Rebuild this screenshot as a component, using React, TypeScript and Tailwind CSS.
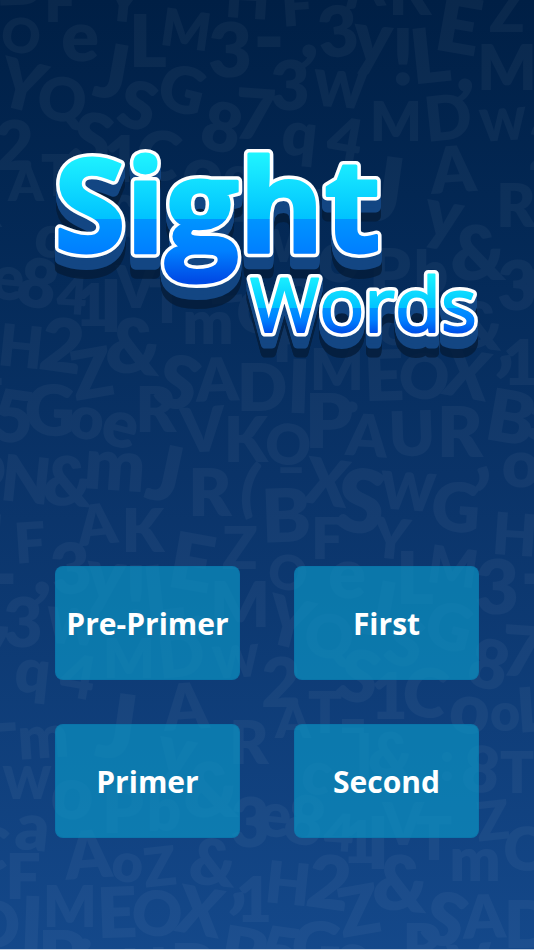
import { useId } from "react"

type Glyph = [char: string, x: number, y: number, size: number, rotate: number]

const TILE_W = 534
const TILE_H = 1074

// centre x, centre y, font size, rotation
const glyphs: Glyph[] = [
  ["F", 60, 2, 56, 0], ["Y", 124, 2, 56, 6], ["H", 248, -2, 58, 4], ["F", 297, 6, 56, -4],
  ["A", 364, -12, 56, -6], ["K", 410, -6, 60, 0], ["E", 459, 26, 78, 10], ["Z", 507, 12, 58, 0],
  ["O", 21, 36, 48, 10], ["e", 80, 36, 70, 0], ["J", 112, 72, 76, 10], ["L", 148, 42, 72, 0],
  ["M", 186, 30, 52, 8], ["3", 230, 50, 76, 0], ["-", 269, 38, 84, 0], [",", 313, 30, 80, 10],
  ["3", 338, 32, 70, -6], ["y", 373, 38, 72, 6], ["!", 403, 58, 78, 0], ["L", 430, 56, 76, -6],
  [",", 469, 64, 80, 10], ["M", 507, 68, 62, 0],
  ["Y", 22, 86, 68, 14], ["Q", 62, 100, 60, 4], ["S", 138, 106, 66, 16], ["G", 182, 90, 64, 14],
  ["8", 222, 128, 68, 14], ["7", 255, 115, 70, 4], ["3", 290, 86, 68, 0], ["W", 340, 90, 50, 4],
  ["2", 14, 146, 68, 0], ["S", 92, 140, 72, 14], ["1", 122, 160, 64, 0], ["C", 158, 156, 68, 10],
  ["q", 300, 134, 62, 6], ["4", 345, 140, 60, 10], ["M", 396, 122, 54, 0], ["D", 448, 118, 62, -6],
  ["W", 503, 125, 44, -4],
  ["A", 26, 183, 50, 0], ["T", 58, 176, 56, 0], ["=", 86, 188, 48, 0], ["o", 203, 172, 70, 6],
  ["o", 238, 176, 52, 0], ["L", 266, 173, 62, -4], ["m", 310, 200, 60, -4],
  ["J", 384, 190, 90, 8], ["A", 453, 170, 64, -4], ["y", 444, 214, 70, 10], ["R", 516, 206, 60, 0],
  ["l", 97, 220, 60, 0], ["&", 124, 218, 60, 8], ["c", 50, 236, 60, 10], [":", 180, 224, 56, 0],
  ["8", 214, 233, 64, 8], ["T", 250, 236, 56, 0], ["W", 294, 246, 46, 0], ["o", 340, 256, 74, 8],
  ["&", 478, 253, 76, 0], ["P", 390, 273, 66, 0], ["b", 431, 273, 60, 0], ["3", 517, 286, 68, 0],
  ["e", 8, 278, 62, 6], ["8", 38, 284, 68, 14], ["4", 72, 296, 52, 4], ["1", 92, 306, 58, 0],
  ["I", 111, 307, 72, 0], ["V", 136, 288, 58, 0], ["T", 167, 302, 60, 0], ["Z", 226, 284, 54, -6],
  ["a", 300, 290, 66, 6], ["A", 355, 318, 66, -4], ["o", 395, 326, 54, 8], ["Z", 427, 330, 54, -6],
  ["&", 480, 326, 64, 6], ["m", 208, 323, 60, 0], ["C", 256, 312, 60, 6], ["F", 290, 340, 62, 0],
  ["H", 21, 347, 58, 6], ["2", 62, 346, 74, 8], ["&", 134, 347, 76, 6], ["Z", 92, 374, 68, -10],
  ["S", 178, 383, 74, 18], ["A", 217, 380, 60, -2], ["D", 262, 388, 66, 0], ["I", 299, 387, 74, 2],
  ["M", 337, 370, 56, 0], ["E", 384, 376, 70, -2], ["O", 424, 377, 62, 12], ["X", 467, 375, 66, 10],
  ["’", 501, 386, 76, 10], ["1", 521, 363, 62, 0],
  ["5", 13, 417, 72, 8], ["G", 50, 411, 70, 2], ["o", 87, 418, 60, 8], ["e", 121, 424, 66, 14],
  ["R", 156, 410, 62, 0], ["V", 203, 430, 62, -4], ["K", 246, 440, 62, 0], ["P", 329, 421, 76, 0],
  [".", 352, 390, 64, 0], ["A", 367, 436, 58, 4], ["U", 412, 434, 62, -2], ["R", 460, 432, 70, 0],
  ["B", 511, 418, 72, 10], ["O", 288, 445, 56, 4],
  ["N", 26, 480, 64, 6], ["&", 68, 482, 68, 4], ["m", 115, 465, 72, 4], ["J", 165, 474, 78, 12],
  ["R", 210, 493, 66, 0], ["(", 250, 488, 62, 10], ["–", 291, 468, 52, 0], ["X", 327, 483, 64, 8],
  ["S", 361, 502, 88, 8], ["W", 408, 492, 52, 4], ["G", 456, 508, 68, 4], ["’", 481, 498, 76, 4],
  ["o", 521, 464, 66, 0], ["B", 286, 516, 74, -2],
]

// the second band of letters is the first one moved by half a tile
const copies = [
  [0, 0],
  [-267, 537],
  [267, 537],
  [-534, 0],
  [534, 0],
  [0, 1074],
  [-267, -537],
  [267, -537],
]

const levels = ["Pre-Primer", "First", "Primer", "Second"]

function LetterBackdrop() {
  const id = useId()
  return (
    <svg className="absolute inset-0 h-full w-full" aria-hidden="true">
      <defs>
        <g
          id={`${id}-set`}
          fill="#ffffff"
          textAnchor="middle"
          className="font-['Lato','Open_Sans',sans-serif] font-extrabold"
        >
          {glyphs.map(([char, x, y, size, rotate], i) => (
            <text key={i} x={x} y={y} dy="0.35em" fontSize={size} transform={`rotate(${rotate} ${x} ${y})`}>
              {char}
            </text>
          ))}
        </g>
        <pattern id={`${id}-tile`} width={TILE_W} height={TILE_H} patternUnits="userSpaceOnUse">
          {copies.map(([x, y]) => (
            <use key={`${x},${y}`} href={`#${id}-set`} x={x} y={y} />
          ))}
        </pattern>
      </defs>
      <rect width="100%" height="100%" fill={`url(#${id}-tile)`} opacity="0.04" />
    </svg>
  )
}

interface LogoWordProps {
  text: string
  x: number
  y: number
  size: number
  weight: number
  fill: string
  inner: number
  outline: number
}

// White outline with the gradient face on top
function LogoWord({ text, x, y, size, weight, fill, inner, outline }: LogoWordProps) {
  const word = { x, y, fontSize: size, fontWeight: weight, strokeLinejoin: "round" as const }
  return (
    <g>
      <text {...word} fill="#ffffff" stroke="#ffffff" strokeWidth={outline} aria-hidden="true">
        {text}
      </text>
      <text {...word} fill={fill} stroke={fill} strokeWidth={inner}>
        {text}
      </text>
    </g>
  )
}

function Logo() {
  return (
    // stacked shadows give the letters their solid side
    <h1 className="[filter:drop-shadow(0_1px_0_#134683)_drop-shadow(0_2px_0_#134683)_drop-shadow(0_4px_0_#134683)_drop-shadow(0_5px_0_#134683)_drop-shadow(0_9px_0_#041b38cc)]">
      <svg
        viewBox="40 130 454 240"
        className="block w-full font-['Open_Sans','Noto_Sans',sans-serif]"
        role="img"
        aria-label="Sight Words"
      >
        <defs>
          <linearGradient id="sight" gradientUnits="userSpaceOnUse" x1="0" y1="148" x2="0" y2="280">
            <stop offset="0" stopColor="#22f8ff" />
            <stop offset="0.54" stopColor="#00c2ff" />
            <stop offset="0.54" stopColor="#0094ff" />
            <stop offset="0.78" stopColor="#0080ff" />
            <stop offset="1" stopColor="#004ce6" />
          </linearGradient>
          <linearGradient id="words" gradientUnits="userSpaceOnUse" x1="0" y1="274" x2="0" y2="335">
            <stop offset="0" stopColor="#1cf4ff" />
            <stop offset="0.55" stopColor="#00c4ff" />
            <stop offset="0.55" stopColor="#0094ff" />
            <stop offset="0.75" stopColor="#0080ff" />
            <stop offset="1" stopColor="#0048e4" />
          </linearGradient>
        </defs>
        <LogoWord text="Sight" x={54} y={252} size={130} weight={700} fill="url(#sight)" inner={3} outline={10} />
        <LogoWord text="Words" x={250} y={332} size={75} weight={400} fill="url(#words)" inner={2} outline={9} />
      </svg>
    </h1>
  )
}

export default function App() {
  return (
    <main className="relative min-h-screen overflow-hidden border-b border-[#c3cfe0] bg-linear-to-b from-[#001f45] via-[#0a3368] to-[#14488a] font-['Open_Sans','Noto_Sans',sans-serif]">
      <LetterBackdrop />
      <div className="relative px-10 pt-[130px] pb-24">
        <Logo />
        <nav className="mt-[196px] grid grid-cols-2 gap-x-[54px] gap-y-11 px-[15px]" aria-label="Levels">
          {levels.map((level) => (
            <button
              key={level}
              type="button"
              className="h-[114px] rounded-lg border border-[#0b6fa6]/40 bg-[#0c93c3]/70 text-[30px] font-bold whitespace-nowrap text-white"
            >
              {level}
            </button>
          ))}
        </nav>
      </div>
    </main>
  )
}
